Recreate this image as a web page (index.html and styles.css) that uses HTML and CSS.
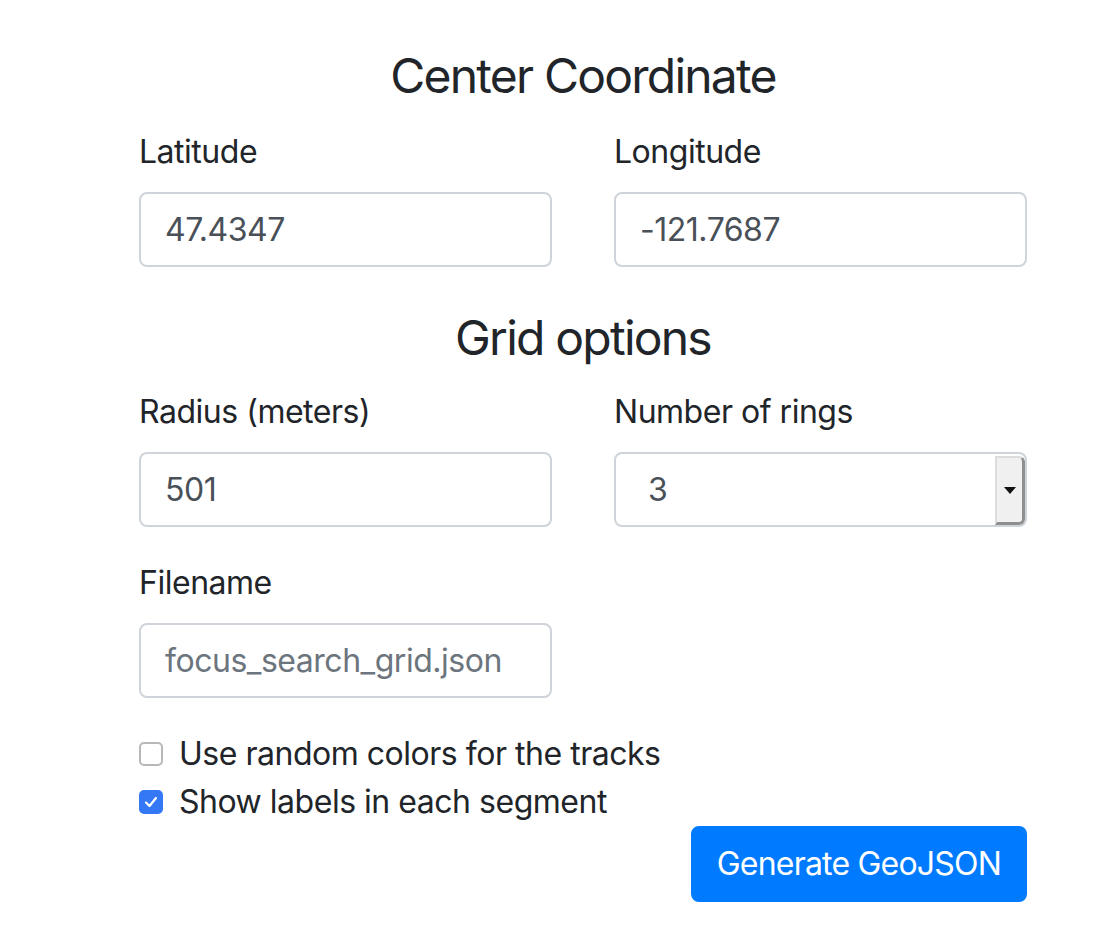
FILE: index.html
```html
<!DOCTYPE html>
<html>
<head>
<meta charset="utf-8">
<link rel="stylesheet" href="styles.css">
</head>
<body>
<form class="form">
  <h4 class="heading heading-first">Center Coordinate</h4>
  <div class="row">
    <div class="group">
      <label class="label">Latitude</label>
      <div class="input">47.4347</div>
    </div>
    <div class="group">
      <label class="label">Longitude</label>
      <div class="input">-121.7687</div>
    </div>
  </div>
  <h4 class="heading">Grid options</h4>
  <div class="row">
    <div class="group">
      <label class="label">Radius (meters)</label>
      <div class="input">501</div>
    </div>
    <div class="group">
      <label class="label">Number of rings</label>
      <div class="input select"><span class="select-value">3</span><span class="select-btn"><svg width="12" height="7" viewBox="0 0 12 7"><path d="M0 0 L12 0 L6 7 Z" fill="#111"/></svg></span></div>
    </div>
  </div>
  <div class="row">
    <div class="group">
      <label class="label">Filename</label>
      <div class="input placeholder">focus_search_grid.json</div>
    </div>
  </div>
  <div class="check">
    <span class="box"></span>
    <span class="check-label">Use random colors for the tracks</span>
  </div>
  <div class="check">
    <span class="box checked"><svg width="14" height="12" viewBox="0 0 14 12"><path d="M2 6.5 L5.5 10 L12 2" fill="none" stroke="#fff" stroke-width="2.2" stroke-linecap="round" stroke-linejoin="round"/></svg></span>
    <span class="check-label">Show labels in each segment</span>
  </div>
  <div class="actions">
    <button type="button" class="btn">Generate GeoJSON</button>
  </div>
</form>
</body>
</html>
```

FILE: styles.css
```css
html, body {
  margin: 0;
  padding: 0;
  background: #fff;
}
body {
  font-family: Inter, "Noto Sans", "Liberation Sans", sans-serif;
  color: #212529;
  letter-spacing: -0.03em;
}
.form {
  width: 888px;
  margin-left: 139px;
  padding-top: 47px;
}
.heading {
  margin: 0;
  font-size: 48px;
  font-weight: 400;
  line-height: 58px;
  text-align: center;
  letter-spacing: -0.037em;
  margin-bottom: 23px;
}
.heading:not(.heading-first) {
  margin-top: 10px;
  margin-bottom: 21px;
}
.row {
  display: flex;
  gap: 62px;
}
.group {
  width: 413px;
  margin-bottom: 32px;
}
.label {
  display: block;
  font-size: 32px;
  line-height: 48px;
  margin-bottom: 16px;
}
.input {
  box-sizing: border-box;
  height: 75px;
  border: 2px solid #ced4da;
  border-radius: 8px;
  padding: 0 24px;
  display: flex;
  align-items: center;
  font-size: 32px;
  color: #495057;
}
.placeholder {
  color: #6c757d;
}
.select {
  padding: 0 0 0 32px;
  justify-content: space-between;
  align-items: stretch;
}
.select-value {
  display: flex;
  align-items: center;
}
.select-btn {
  width: 30px;
  box-sizing: border-box;
  margin: 2px 0 0 0;
  background: #f0f0f0;
  border-left: 2px solid #dcdcdc;
  border-top: 2px solid #dcdcdc;
  border-right: 3px solid #8f8f8f;
  border-bottom: 3px solid #8f8f8f;
  border-radius: 0 6px 6px 0;
  display: flex;
  align-items: center;
  justify-content: center;
}
.check {
  display: flex;
  align-items: center;
  height: 48px;
  font-size: 32px;
  line-height: 48px;
}
.box {
  box-sizing: border-box;
  width: 24px;
  height: 24px;
  border: 2px solid #b8b8b8;
  border-radius: 5px;
  margin-right: 16px;
  background: #fff;
  display: flex;
  align-items: center;
  justify-content: center;
}
.box.checked {
  background: #3478f6;
  border-color: #3478f6;
}
.actions {
  display: flex;
  justify-content: flex-end;
  margin-top: 0;
}
.btn {
  font-family: inherit;
  font-size: 32px;
  line-height: 48px;
  letter-spacing: -0.025em;
  color: #fff;
  background: #007bff;
  border: 2px solid #007bff;
  border-radius: 8px;
  padding: 12px 24px;
  height: 76px;
}
```
